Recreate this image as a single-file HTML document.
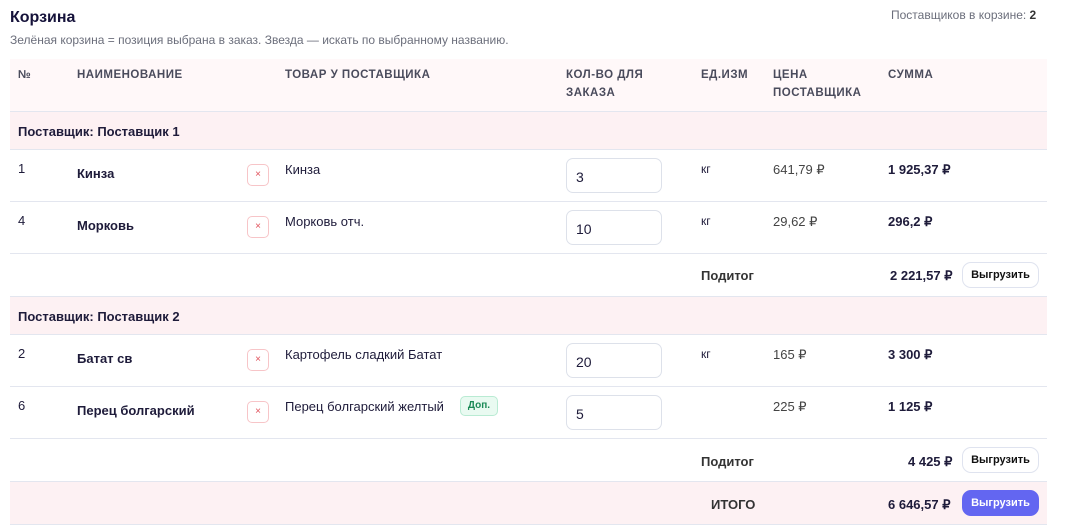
<!DOCTYPE html>
<html><head><meta charset="utf-8"><style>
*{margin:0;padding:0;box-sizing:border-box}
body{width:1066px;height:532px;background:#fff;font-family:"Liberation Sans",sans-serif;color:#1e1b3a;position:relative;overflow:hidden;font-size:13px}
.a{position:absolute;white-space:nowrap}
.b{font-weight:bold}
.band{position:absolute;left:10px;width:1037px}
.line{position:absolute;left:10px;width:1037px;height:1px;background:#e3e6ef}
.th{position:absolute;font-size:11.5px;font-weight:bold;color:#4a4b5c;letter-spacing:.5px;line-height:18px}
.x{position:absolute;left:247px;width:22px;height:22px;border:1px solid #f7c5c8;border-radius:5px;color:#e0505a;font-size:10px;text-align:center;line-height:19px}
.in{position:absolute;left:566px;width:96px;height:35px;border:1px solid #dde1ea;border-radius:7px;font-size:14px;padding:10px 0 0 9px}
.btn{position:absolute;left:962px;width:77px;height:26px;border:1px solid #dfe3ef;border-radius:9px;background:#fff;font-size:11px;font-weight:bold;text-align:center;line-height:24px;color:#111}
</style></head><body>
<div class="a b" style="left:10px;top:9px;font-size:16px;color:#15123a">Корзина</div>
<div class="a" style="left:10px;top:33px;font-size:12px;color:#6b6e7b">Зелёная корзина = позиция выбрана в заказ. Звезда — искать по выбранному названию.</div>
<div class="a" style="left:891px;top:8px;font-size:12px;color:#6b6e7b">Поставщиков в корзине: <b style="color:#333">2</b></div>

<div class="band" style="top:59px;height:52px;background:#fff8f9"></div>
<div class="th" style="left:18px;top:66px">№</div>
<div class="th" style="left:77px;top:66px">НАИМЕНОВАНИЕ</div>
<div class="th" style="left:285px;top:66px">ТОВАР У ПОСТАВЩИКА</div>
<div class="th" style="left:566px;top:66px">КОЛ-ВО ДЛЯ<br>ЗАКАЗА</div>
<div class="th" style="left:701px;top:66px">ЕД.ИЗМ</div>
<div class="th" style="left:773px;top:66px">ЦЕНА<br>ПОСТАВЩИКА</div>
<div class="th" style="left:888px;top:66px">СУММА</div>
<div class="line" style="top:111px"></div>

<div class="band" style="top:112px;height:37px;background:#fdf1f3"></div>
<div class="a b" style="left:18px;top:124px">Поставщик: Поставщик 1</div>
<div class="line" style="top:149px"></div>

<div class="a" style="left:18px;top:161px">1</div>
<div class="a b" style="left:77px;top:166px">Кинза</div>
<div class="x" style="top:164px">×</div>
<div class="a" style="left:285px;top:162px">Кинза</div>
<div class="in" style="top:158px">3</div>
<div class="a" style="left:701px;top:162px;font-size:12px">кг</div>
<div class="a" style="left:773px;top:162px;color:#444">641,79 ₽</div>
<div class="a b" style="left:888px;top:162px">1 925,37 ₽</div>
<div class="line" style="top:201px"></div>

<div class="a" style="left:18px;top:213px">4</div>
<div class="a b" style="left:77px;top:218px">Морковь</div>
<div class="x" style="top:216px">×</div>
<div class="a" style="left:285px;top:214px">Морковь отч.</div>
<div class="in" style="top:210px">10</div>
<div class="a" style="left:701px;top:214px;font-size:12px">кг</div>
<div class="a" style="left:773px;top:214px;color:#444">29,62 ₽</div>
<div class="a b" style="left:888px;top:214px">296,2 ₽</div>
<div class="line" style="top:253px"></div>

<div class="a b" style="left:701px;top:268px;color:#333">Подитог</div>
<div class="a b" style="left:890px;top:268px">2 221,57 ₽</div>
<div class="btn" style="top:262px">Выгрузить</div>
<div class="line" style="top:296px"></div>

<div class="band" style="top:297px;height:37px;background:#fdf1f3"></div>
<div class="a b" style="left:18px;top:309px">Поставщик: Поставщик 2</div>
<div class="line" style="top:334px"></div>

<div class="a" style="left:18px;top:346px">2</div>
<div class="a b" style="left:77px;top:351px">Батат св</div>
<div class="x" style="top:349px">×</div>
<div class="a" style="left:285px;top:347px">Картофель сладкий Батат</div>
<div class="in" style="top:343px">20</div>
<div class="a" style="left:701px;top:347px;font-size:12px">кг</div>
<div class="a" style="left:773px;top:347px;color:#444">165 ₽</div>
<div class="a b" style="left:888px;top:347px">3 300 ₽</div>
<div class="line" style="top:386px"></div>

<div class="a" style="left:18px;top:398px">6</div>
<div class="a b" style="left:77px;top:403px">Перец болгарский</div>
<div class="x" style="top:401px">×</div>
<div class="a" style="left:285px;top:399px">Перец болгарский желтый</div>
<div class="a b" style="left:460px;top:396px;width:38px;height:20px;border:1px solid #b9ebd3;background:#e9faf1;border-radius:5px;color:#1b8a57;font-size:10px;text-align:center;line-height:18px">Доп.</div>
<div class="in" style="top:395px">5</div>
<div class="a" style="left:773px;top:399px;color:#444">225 ₽</div>
<div class="a b" style="left:888px;top:399px">1 125 ₽</div>
<div class="line" style="top:438px"></div>

<div class="a b" style="left:701px;top:454px;color:#333">Подитог</div>
<div class="a b" style="left:908px;top:454px">4 425 ₽</div>
<div class="btn" style="top:447px">Выгрузить</div>
<div class="line" style="top:481px"></div>

<div class="band" style="top:482px;height:42px;background:#fdf1f3"></div>
<div class="a b" style="left:711px;top:497px;color:#333">ИТОГО</div>
<div class="a b" style="left:888px;top:497px">6 646,57 ₽</div>
<div class="btn" style="top:490px;background:#6366f1;border-color:#6366f1;color:#fff">Выгрузить</div>
<div class="line" style="top:524px"></div>
</body></html>
